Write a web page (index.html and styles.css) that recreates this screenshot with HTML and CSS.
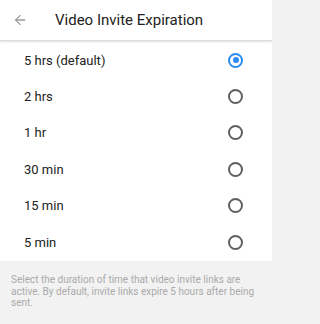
FILE: index.html
```html
<!DOCTYPE html>
<html>
<head>
<meta charset="utf-8">
<link rel="stylesheet" href="styles.css">
</head>
<body>
<div class="screen">
  <header class="bar">
    <svg class="back" width="16" height="16" viewBox="0 0 24 24"><path d="M20 11H7.83l5.59-5.59L12 4l-8 8 8 8 1.41-1.41L7.83 13H20v-2z" fill="#9e9e9e"/></svg>
    <h1 class="title">Video Invite Expiration</h1>
  </header>
  <ul class="list">
    <li class="row"><span>5 hrs (default)</span><span class="radio on"></span></li>
    <li class="row"><span>2 hrs</span><span class="radio"></span></li>
    <li class="row"><span>1 hr</span><span class="radio"></span></li>
    <li class="row"><span>30 min</span><span class="radio"></span></li>
    <li class="row"><span>15 min</span><span class="radio"></span></li>
    <li class="row"><span>5 min</span><span class="radio"></span></li>
  </ul>
  <p class="note">Select the duration of time that video invite links are active. By default, invite links expire 5 hours after being sent.</p>
</div>
</body>
</html>
```
FILE: styles.css
```css
html, body { margin: 0; padding: 0; }
body { font-family: Roboto, "Noto Sans", sans-serif; background: #f2f2f2; }
.screen { width: 272px; height: 324px; display: flex; flex-direction: column; overflow: hidden; }
.bar { height: 40px; display: flex; align-items: center; background: #fff; border-bottom: 1px solid #dcdcdc; box-shadow: 0 1px 2px rgba(0,0,0,0.12); position: relative; z-index: 1; }
.back { margin-left: 12px; margin-right: 27px; }
.title { margin: 0; font-size: 15px; font-weight: 400; color: #222; }
.list { list-style: none; margin: 0; padding: 1px 0 1px; background: #fff; }
.row { height: 36.4px; display: flex; align-items: center; justify-content: space-between; padding: 0 29px 0 24px; font-size: 13px; color: #222; }
.radio { width: 11px; height: 11px; border: 2px solid #5f5f5f; border-radius: 50%; box-sizing: content-box; }
.radio.on { border-color: #2b8cf0; position: relative; }
.radio.on::after { content: ""; position: absolute; left: 2.5px; top: 2.5px; width: 6px; height: 6px; border-radius: 50%; background: #2b8cf0; }
.note { margin: 0; padding: 13px 11px 0; font-size: 10px; line-height: 11.5px; color: #aaa; }
```
